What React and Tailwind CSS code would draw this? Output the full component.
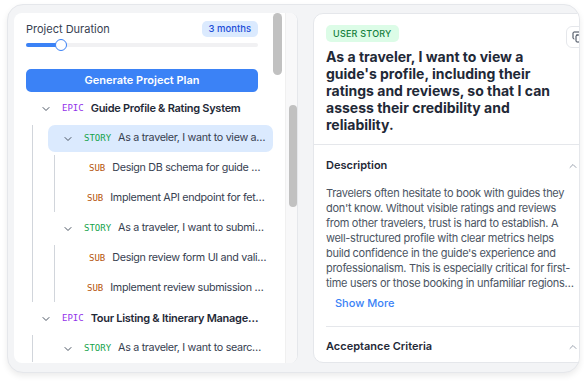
import React from "react";
import { ChevronDown, ChevronUp, Copy } from "lucide-react";

const epics = [
  {
    title: "Guide Profile & Rating System",
    stories: [
      {
        title: "As a traveler, I want to view a…",
        active: true,
        subs: [
          { title: "Design DB schema for guide …", pad: "pl-[19px]" },
          { title: "Implement API endpoint for fet…", pad: "pl-[17px]" },
        ],
      },
      {
        title: "As a traveler, I want to submi…",
        subs: [
          { title: "Design review form UI and vali…", pad: "pl-[19px]" },
          { title: "Implement review submission …", pad: "pl-[17px]" },
        ],
      },
    ],
  },
  {
    title: "Tour Listing & Itinerary Manage…",
    stories: [{ title: "As a traveler, I want to searc…", subs: [] }],
  },
];

// Description is clamped in the source UI, keep the same line breaks
const descriptionLines = [
  "Travelers often hesitate to book with guides they",
  "don't know. Without visible ratings and reviews",
  "from other travelers, trust is hard to establish. A",
  "well-structured profile with clear metrics helps",
  "build confidence in the guide's experience and",
  "professionalism. This is especially critical for first-",
  "time users or those booking in unfamiliar regions…",
];

const mono = "font-['DejaVu_Sans_Mono',monospace] text-[9px]";
const rowText = "ml-[7px] whitespace-nowrap text-[10.75px] tracking-[-0.03em] text-[#374151]";

const StoryNode = ({ story }) => (
  <div className="flex flex-col gap-[3px]">
    <div
      className={`flex h-[27px] items-center rounded-[7px] pl-[14px] ${
        story.active ? "bg-[#dbeafe]" : ""
      }`}
    >
      <ChevronDown className="h-3 w-3 flex-none text-[#4b5563]" strokeWidth={2} />
      <span className={`ml-[10px] ${mono} text-[#16a34a]`}>STORY</span>
      <span className={rowText}>{story.title}</span>
    </div>
    {/* Subtasks */}
    {story.subs.length > 0 && (
      <div className="ml-[6px] flex flex-col gap-[3px] border-l border-[#d1d5db] pl-[15px]">
        {story.subs.map((sub, i) => (
          <div key={i} className={`flex h-[27px] items-center ${sub.pad}`}>
            <span className={`${mono} text-[#b45309]`}>SUB</span>
            <span className={rowText}>{sub.title}</span>
          </div>
        ))}
      </div>
    )}
  </div>
);

const EpicNode = ({ epic }) => (
  <div className="flex flex-col gap-[3px]">
    <div className="flex h-[27px] items-center pl-[26px]">
      <ChevronDown className="h-3 w-3 flex-none text-[#4b5563]" strokeWidth={2} />
      <span className={`ml-[10px] ${mono} text-[#9333ea]`}>EPIC</span>
      <span className="ml-[7px] whitespace-nowrap text-[11px] font-semibold tracking-[-0.025em] text-[#1f2937]">
        {epic.title}
      </span>
    </div>
    <div className="ml-[18px] flex flex-col gap-[3px] border-l border-[#d1d5db] pl-[15px]">
      {epic.stories.map((story, i) => (
        <StoryNode key={i} story={story} />
      ))}
    </div>
  </div>
);

export default function App() {
  return (
    <div className="h-[381px] w-[584px] overflow-hidden bg-white pl-[7px] pt-[4px] font-['Inter',sans-serif]">
      <div className="flex h-[369px] w-[573px] gap-[15px] overflow-hidden rounded-[16px] border border-[#e5e7eb] bg-[#f3f4f6] pb-[9px] pl-[6px] pt-[8px] shadow-[0_3px_6px_rgba(0,0,0,0.08)]">
        {/* Left panel */}
        <div className="flex h-full w-[284px] flex-none overflow-hidden rounded-[8px] border-r border-[#e5e7eb] bg-white">
          <div className="flex w-[271px] flex-none flex-col">
            {/* Settings */}
            <div className="flex pb-[3px]">
              <div className="ml-[12px] w-[232px] flex-none pt-[8px]">
                <div className="flex h-[16px] items-center justify-between">
                  <span className="text-[11px] text-[#374151]">Project Duration</span>
                  <span className="flex h-[16px] items-center rounded-[5px] bg-[#dbeafe] px-[7px] text-[9.5px] font-medium text-[#1d4ed8]">
                    3 months
                  </span>
                </div>
                <div className="relative mt-[2px] flex h-[12px] items-center">
                  <div className="h-[4px] w-full rounded-full bg-[#f1f1f3]">
                    <div className="h-full w-[35px] rounded-full bg-[#3b82f6]" />
                  </div>
                  <div className="absolute left-[29px] top-0 h-[12px] w-[12px] rounded-full border-[1.5px] border-[#3b82f6] bg-white" />
                </div>
                <button className="mt-[18px] flex h-[23px] w-full items-center justify-center rounded-[5px] bg-[#3b82f6] text-[11px] font-semibold text-white">
                  Generate Project Plan
                </button>
              </div>
              <div className="ml-[15px] h-[62px] w-[9px] flex-none rounded-full bg-[#c1c1c1]" />
            </div>

            {/* Tree */}
            <div className="flex flex-col gap-[3px] pr-[12px]">
              {epics.map((epic, i) => (
                <EpicNode key={i} epic={epic} />
              ))}
            </div>
          </div>
          {/* Scroll track */}
          <div className="flex-1 border-l border-[#f0f0f0] bg-[#f8f8f9] pl-[3px] pt-[92px]">
            <div className="h-[102px] w-[8px] rounded-full bg-[#c1c1c1]" />
          </div>
        </div>

        {/* Right detail card */}
        <div className="flex h-full w-[290px] flex-none flex-col overflow-hidden rounded-[10px] border border-[#e5e7eb] bg-white">
          <div className="flex border-b border-[#e5e7eb] px-[12px] pb-[11px] pt-[11px]">
            <div className="w-[232px] flex-none">
              <div className="flex h-[17px] w-fit items-center rounded-[5px] bg-[#dcfce7] px-[7px] text-[9px] font-medium uppercase leading-none tracking-wide text-[#15803d]">
                User Story
              </div>
              <h2 className="mt-[6px] text-[14px] font-bold leading-[17px] text-[#1f2937]">
                As a traveler, I want to view a guide's profile, including their ratings and reviews, so that I can assess their credibility and reliability.
              </h2>
            </div>
            <button className="ml-auto mt-[1px] flex h-[22px] w-[24px] items-center justify-center rounded-[6px] border border-[#e5e7eb] bg-white text-[#374151]">
              <Copy className="h-3 w-3" strokeWidth={2} />
            </button>
          </div>

          <div className="mx-[12px] border-b border-[#e5e7eb] pb-[15px]">
            <div className="flex items-center justify-between pb-[13px] pt-[13px]">
              <span className="text-[11px] font-semibold leading-[15px] text-[#1f2937]">Description</span>
              <ChevronUp className="mr-[11px] h-3 w-3 text-[#9ca3af]" strokeWidth={2} />
            </div>
            <p className="whitespace-nowrap text-[11px] leading-[15px] tracking-[-0.027em] text-[#4b5563]">
              {descriptionLines.map((line, i) => (
                <span key={i} className="block">
                  {line}
                </span>
              ))}
            </p>
            <button className="mt-[5px] block pl-[9px] text-[11px] font-medium leading-[15px] text-[#3b82f6]">
              Show More
            </button>
          </div>

          <div className="mx-[12px] flex items-center justify-between py-[12px]">
            <span className="text-[11px] font-semibold leading-[15px] text-[#1f2937]">Acceptance Criteria</span>
            <ChevronUp className="mr-[11px] h-3 w-3 text-[#9ca3af]" strokeWidth={2} />
          </div>
        </div>
      </div>
    </div>
  );
}
